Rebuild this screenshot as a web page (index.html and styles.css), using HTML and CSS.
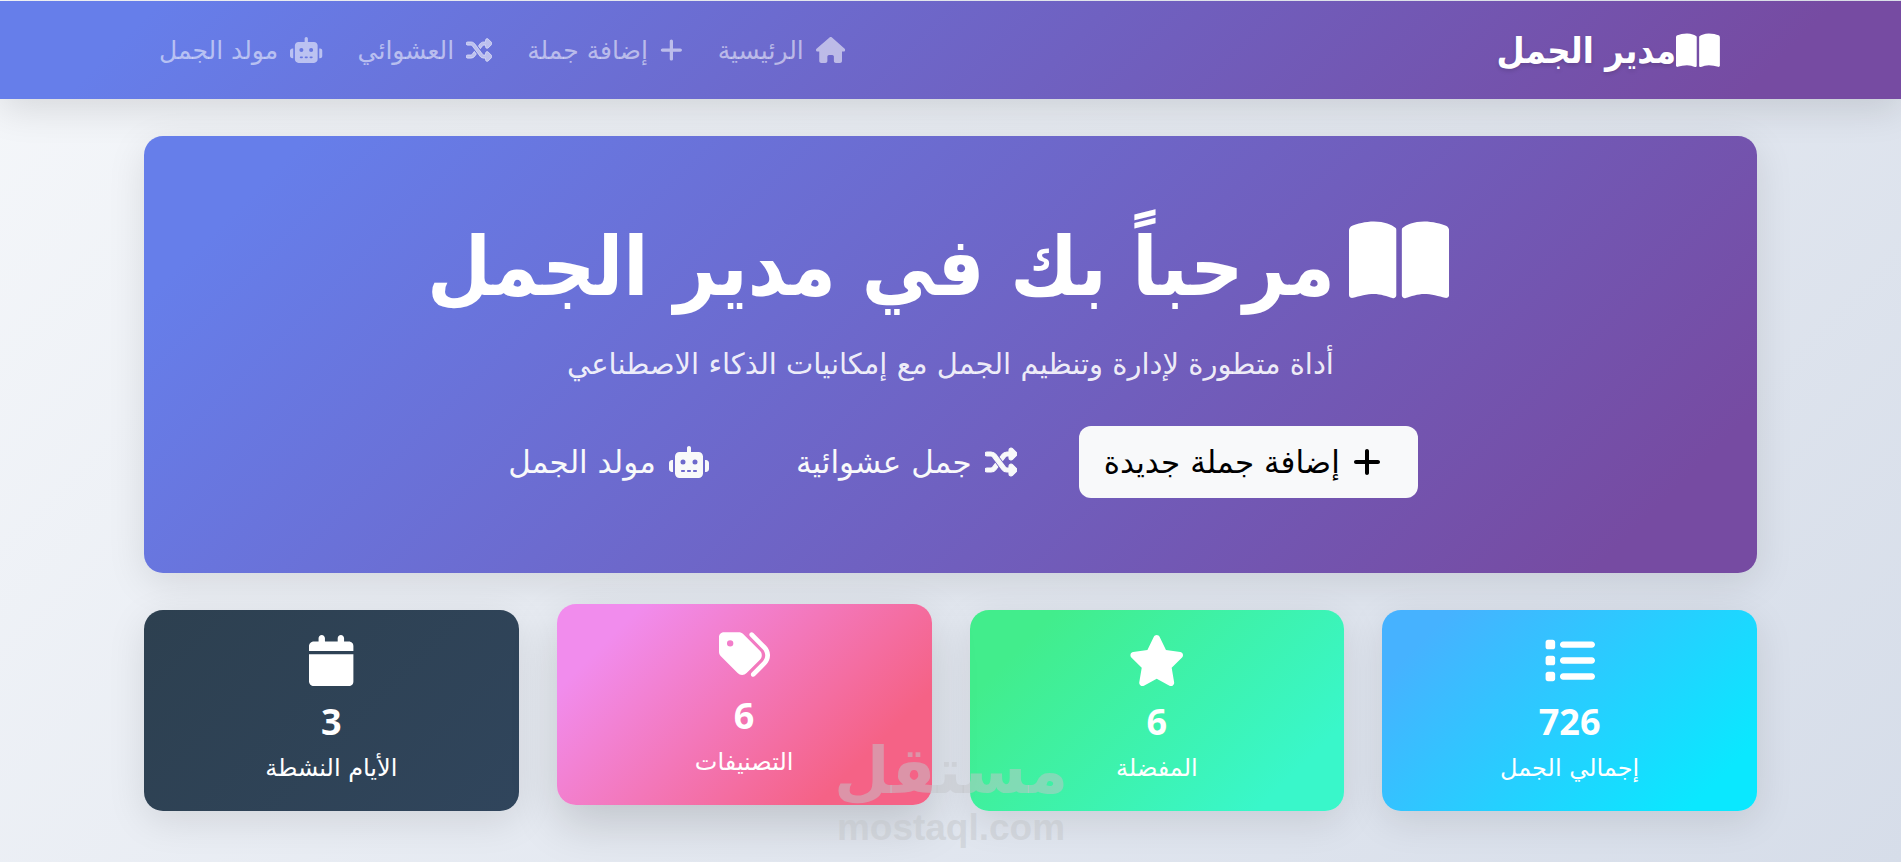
FILE: index.html
```html
<!DOCTYPE html>
<html lang="ar" dir="rtl">
<head>
  <meta charset="UTF-8" />
  <meta name="viewport" content="width=device-width, initial-scale=1.0" />
  <title>مدير الجمل</title>
  <link rel="stylesheet" href="styles.css">
</head>
<body>
  <svg class="sprite" aria-hidden="true">
    <symbol id="book" viewBox="0 0 576 512"><path d="M249.6 471.5c10.8 3.8 22.4-4.1 22.4-15.5V78.6c0-4.2-1.6-8.4-5-11C247.4 52 202.4 32 144 32C93.5 32 46.3 45.3 18.1 56.1C6.8 60.5 0 71.7 0 83.8V454.1c0 11.9 12.8 20.2 24.1 16.5C55.6 460.1 105.5 448 144 448c33.9 0 79 14 105.6 23.5zm76.8 0C353 462 398.1 448 432 448c38.5 0 88.4 12.1 119.9 22.6c11.3 3.8 24.1-4.6 24.1-16.5V83.8c0-12.1-6.8-23.3-18.1-27.6C529.7 45.3 482.5 32 432 32c-58.4 0-103.4 20-123 35.6c-3.3 2.6-5 6.8-5 11V456c0 11.4 11.7 19.3 22.4 15.5z"/></symbol>
    <symbol id="house" viewBox="0 0 576 512"><path d="M575.8 255.5c0 18-15 32.1-32 32.1h-32l.7 160.2c0 2.7-.2 5.4-.5 8.1V472c0 22.1-17.9 40-40 40H456c-1.1 0-2.2 0-3.3-.1c-1.4 .1-2.8 .1-4.2 .1H416 392c-22.1 0-40-17.9-40-40V448 384c0-17.7-14.3-32-32-32H256c-17.7 0-32 14.3-32 32v64 24c0 22.1-17.9 40-40 40H160 128.1c-1.5 0-3-.1-4.5-.2c-1.2 .1-2.4 .2-3.6 .2H104c-22.1 0-40-17.9-40-40V360c0-.9 0-1.9 .1-2.8V287.6H32c-18 0-32-14-32-32.1c0-9 3-17 10-24L266.4 8c7-7 15-8 22-8s15 2 21 7L564.8 231.5c8 7 12 15 11 24z"/></symbol>
    <symbol id="plus" viewBox="0 0 448 512"><path d="M256 80c0-17.7-14.3-32-32-32s-32 14.3-32 32V224H48c-17.7 0-32 14.3-32 32s14.3 32 32 32H192V432c0 17.7 14.3 32 32 32s32-14.3 32-32V288H400c17.7 0 32-14.3 32-32s-14.3-32-32-32H256V80z"/></symbol>
    <symbol id="shuffle" viewBox="0 0 512 512"><path stroke="currentColor" stroke-width="18" d="M403.8 34.4c12-5 25.7-2.2 34.9 6.9l64 64c6 6 9.4 14.1 9.4 22.6s-3.4 16.6-9.4 22.6l-64 64c-9.2 9.2-22.9 11.9-34.9 6.9s-19.8-16.6-19.8-29.6V160H352c-10.1 0-19.6 4.7-25.6 12.8L284 229.3 244 176l31.2-41.6C293.3 110.2 321.8 96 352 96h32V64c0-12.9 7.8-24.6 19.8-29.6zM164 282.7L204 336l-31.2 41.6C154.7 401.8 126.2 416 96 416H32c-17.7 0-32-14.3-32-32s14.3-32 32-32H96c10.1 0 19.6-4.7 25.6-12.8L164 282.7zm274.6 188c-9.2 9.2-22.9 11.9-34.9 6.9s-19.8-16.6-19.8-29.6V416H352c-30.2 0-58.7-14.2-76.8-38.4L121.6 172.8c-6-8.1-15.5-12.8-25.6-12.8H32c-17.7 0-32-14.3-32-32s14.3-32 32-32H96c30.2 0 58.7 14.2 76.8 38.4L326.4 339.2c6 8.1 15.5 12.8 25.6 12.8h32V320c0-12.9 7.8-24.6 19.8-29.6s25.7-2.2 34.9 6.9l64 64c6 6 9.4 14.1 9.4 22.6s-3.4 16.6-9.4 22.6l-64 64z"/></symbol>
    <symbol id="robot" viewBox="0 0 640 512"><path d="M320 0c17.7 0 32 14.3 32 32V96H472c39.8 0 72 32.2 72 72V440c0 39.8-32.2 72-72 72H168c-39.8 0-72-32.2-72-72V168c0-39.8 32.2-72 72-72H288V32c0-17.7 14.3-32 32-32zM208 384c-8.8 0-16 7.2-16 16s7.2 16 16 16h32c8.8 0 16-7.2 16-16s-7.2-16-16-16H208zm96 0c-8.8 0-16 7.2-16 16s7.2 16 16 16h32c8.8 0 16-7.2 16-16s-7.2-16-16-16H304zm96 0c-8.8 0-16 7.2-16 16s7.2 16 16 16h32c8.8 0 16-7.2 16-16s-7.2-16-16-16H400zM264 256a40 40 0 1 0 -80 0 40 40 0 1 0 80 0zm152 40a40 40 0 1 0 0-80 40 40 0 1 0 0 80zM48 224H64V416H48c-26.5 0-48-21.5-48-48V272c0-26.5 21.5-48 48-48zm544 0c26.5 0 48 21.5 48 48v96c0 26.5-21.5 48-48 48H576V224h16z"/></symbol>
    <symbol id="list" viewBox="0 0 512 512"><path d="M40 48C26.7 48 16 58.7 16 72v48c0 13.3 10.7 24 24 24H88c13.3 0 24-10.7 24-24V72c0-13.3-10.7-24-24-24H40zM192 64c-17.7 0-32 14.3-32 32s14.3 32 32 32H480c17.7 0 32-14.3 32-32s-14.3-32-32-32H192zm0 160c-17.7 0-32 14.3-32 32s14.3 32 32 32H480c17.7 0 32-14.3 32-32s-14.3-32-32-32H192zm0 160c-17.7 0-32 14.3-32 32s14.3 32 32 32H480c17.7 0 32-14.3 32-32s-14.3-32-32-32H192zM16 232v48c0 13.3 10.7 24 24 24H88c13.3 0 24-10.7 24-24V232c0-13.3-10.7-24-24-24H40c-13.3 0-24 10.7-24 24zM40 368c-13.3 0-24 10.7-24 24v48c0 13.3 10.7 24 24 24H88c13.3 0 24-10.7 24-24V392c0-13.3-10.7-24-24-24H40z"/></symbol>
    <symbol id="star" viewBox="0 0 576 512"><path d="M316.9 18C311.6 7 300.4 0 288.1 0s-23.4 7-28.8 18L195 150.3 51.4 171.5c-12 1.8-22 10.2-25.7 21.7s-.7 24.2 7.9 32.7L137.8 329 113.2 474.7c-2 12 3 24.2 12.9 31.3s23 8 33.8 2.3l128.3-68.5 128.3 68.5c10.8 5.7 23.9 4.9 33.8-2.3s14.9-19.3 12.9-31.3L438.5 329 542.7 225.9c8.6-8.5 11.7-21.2 7.9-32.7s-13.7-19.9-25.7-21.7L381.2 150.3 316.9 18z"/></symbol>
    <symbol id="tags" viewBox="0 0 512 512"><path d="M345 39.1L472.8 168.4c52.4 53 52.4 138.2 0 191.2L360.8 472.9c-9.3 9.4-24.5 9.5-33.9 .2s-9.5-24.5-.2-33.9L438.6 325.9c33.9-34.3 33.9-89.4 0-123.7L310.9 72.9c-9.3-9.4-9.2-24.6 .2-33.9s24.6-9.2 33.9 .2zM0 229.5V80C0 53.5 21.5 32 48 32H197.5c17 0 33.3 6.7 45.3 18.7l168 168c25 25 25 65.5 0 90.5L277.3 442.7c-25 25-65.5 25-90.5 0l-168-168C6.7 262.7 0 246.5 0 229.5zM144 144a32 32 0 1 0 -64 0 32 32 0 1 0 64 0z"/></symbol>
    <symbol id="calendar" viewBox="0 0 448 512"><path d="M96 32V64H48C21.5 64 0 85.5 0 112v48H448V112c0-26.5-21.5-48-48-48H352V32c0-17.7-14.3-32-32-32s-32 14.3-32 32V64H160V32c0-17.7-14.3-32-32-32S96 14.3 96 32zM448 192H0V464c0 26.5 21.5 48 48 48H400c26.5 0 48-21.5 48-48V192z"/></symbol>
  </svg>

  <nav class="navbar">
    <div class="nav-inner">
      <a class="brand" href="#"><svg class="icon wide"><use href="#book"/></svg>مدير الجمل</a>
      <div class="nav-links">
        <a href="#"><svg class="icon wide"><use href="#house"/></svg>الرئيسية</a>
        <a href="#"><svg class="icon narrow"><use href="#plus"/></svg>إضافة جملة</a>
        <a href="#"><svg class="icon"><use href="#shuffle"/></svg>العشوائي</a>
        <a href="#"><svg class="icon wider"><use href="#robot"/></svg>مولد الجمل</a>
      </div>
    </div>
  </nav>

  <main class="container">
    <section class="hero">
      <h1><svg class="icon wide"><use href="#book"/></svg>مرحباً بك في مدير الجمل</h1>
      <p>أداة متطورة لإدارة وتنظيم الجمل مع إمكانيات الذكاء الاصطناعي</p>
      <div class="actions">
        <a class="btn btn-light" href="#"><svg class="icon narrow"><use href="#plus"/></svg>إضافة جملة جديدة</a>
        <a class="btn" href="#"><svg class="icon"><use href="#shuffle"/></svg>جمل عشوائية</a>
        <a class="btn" href="#"><svg class="icon wider"><use href="#robot"/></svg>مولد الجمل</a>
      </div>
    </section>

    <section class="stats">
      <div class="card blue">
        <svg class="icon"><use href="#list"/></svg>
        <div class="number">726</div>
        <div class="label">إجمالي الجمل</div>
      </div>
      <div class="card green">
        <svg class="icon wide"><use href="#star"/></svg>
        <div class="number">6</div>
        <div class="label">المفضلة</div>
      </div>
      <div class="card pink raised">
        <svg class="icon"><use href="#tags"/></svg>
        <div class="number">6</div>
        <div class="label">التصنيفات</div>
      </div>
      <div class="card dark">
        <svg class="icon narrow"><use href="#calendar"/></svg>
        <div class="number">3</div>
        <div class="label">الأيام النشطة</div>
      </div>
    </section>
  </main>

  <div class="watermark">
    <div class="mark-ar">مستقل</div>
    <div class="mark-en" dir="ltr">mostaql.com</div>
  </div>
</body>
</html>
```

FILE: styles.css
```css
* {
  box-sizing: border-box;
}

body {
  margin: 0;
  padding-top: 1px;
  min-height: 100vh;
  overflow: hidden;
  border-right: 1px solid #fff;
  font-family: "DejaVu Sans", sans-serif;
  color: #fff;
  background: linear-gradient(135deg, #f5f7fa, #d6dde9);
}

a {
  color: inherit;
  text-decoration: none;
}

.sprite {
  display: none;
}

.icon {
  width: 1em;
  height: 1em;
  fill: currentColor;
  flex: none;
  overflow: visible;
}

.icon.narrow {
  width: 0.875em;
}

.icon.wide {
  width: 1.125em;
}

.icon.wider {
  width: 1.25em;
}

.navbar {
  background: linear-gradient(135deg, #667eea 8%, #764ba2 92%);
  box-shadow: 0 10px 38px rgba(0, 0, 0, 0.12);
}

.nav-inner {
  max-width: 1613px;
  height: 98px;
  margin: 0 auto;
  padding: 0 37px 0 15px;
  display: flex;
  align-items: center;
  justify-content: space-between;
}

.brand {
  display: flex;
  align-items: center;
  font-family: "DejaVu Sans Condensed", "DejaVu Sans", sans-serif;
  font-size: 36px;
  font-weight: bold;
  text-shadow: 0 2px 4px rgba(0, 0, 0, 0.15);
}

.brand .icon {
  font-size: 39px;
}

.nav-links {
  display: flex;
  gap: 35px;
  font-size: 25px;
  color: rgba(255, 255, 255, 0.55);
}

.nav-links a {
  display: flex;
  align-items: center;
  gap: 12px;
}

.nav-links .icon {
  font-size: 26px;
}

.container {
  max-width: 1613px;
  margin: 0 auto;
  padding-top: 37px;
}

.hero {
  height: 437px;
  padding-top: 80px;
  border-radius: 19px;
  text-align: center;
  background: linear-gradient(135deg, #667eea 8%, #764ba2 92%);
  box-shadow: 0 10px 38px rgba(0, 0, 0, 0.1);
}

.hero h1 {
  display: flex;
  justify-content: center;
  gap: 14px;
  margin: 0;
  padding-right: 25px;
  font-family: "DejaVu Sans Condensed", "DejaVu Sans", sans-serif;
  font-size: 82px;
  line-height: 102px;
}

.hero h1 .icon {
  font-size: 89px;
}

.hero p {
  margin: 18px 0 0;
  font-size: 29px;
  line-height: 56px;
  color: rgba(255, 255, 255, 0.9);
}

.actions {
  display: flex;
  justify-content: center;
  gap: 25px;
  margin-top: 34px;
}

.btn {
  display: flex;
  align-items: center;
  gap: 13px;
  height: 72px;
  padding: 0 37px 0 25px;
  border-radius: 12px;
  font-size: 31px;
  color: #f8f9fa;
}

.btn .icon {
  font-size: 32px;
}

.btn-light {
  color: #000;
  background: #f8f9fa;
}

.stats {
  display: grid;
  grid-template-columns: repeat(4, 1fr);
  gap: 38px;
  margin-top: 37px;
}

.card {
  height: 201px;
  padding-top: 25px;
  border-radius: 19px;
  text-align: center;
  box-shadow: 0 10px 38px rgba(0, 0, 0, 0.1);
}

.card .icon {
  display: block;
  margin: 0 auto;
  font-size: 51px;
}

.raised {
  transform: translateY(-6px);
  box-shadow: 0 18px 48px rgba(0, 0, 0, 0.16);
}

.blue {
  background: linear-gradient(135deg, #46b2ff 12%, #0ae8ff 88%);
}

.green {
  background: linear-gradient(135deg, #42ed8c 15%, #39f7ca 85%);
}

.pink {
  background: linear-gradient(135deg, #f18ced 15%, #f56286 80%);
}

.dark {
  background: linear-gradient(135deg, #2d4050, #30455c);
}

.number {
  margin-top: 12px;
  font-family: "Noto Sans", sans-serif;
  font-size: 36px;
  font-weight: bold;
  line-height: 48px;
}

.label {
  font-size: 24px;
  line-height: 44px;
}

.watermark {
  position: absolute;
  left: 0;
  right: 0;
  bottom: 16px;
  text-align: center;
  font-weight: bold;
  color: rgba(195, 198, 202, 0.5);
}

.mark-ar {
  font-size: 64px;
  line-height: 76px;
}

.mark-en {
  font-family: "Liberation Sans", sans-serif;
  font-size: 37px;
  line-height: 37px;
}
```
